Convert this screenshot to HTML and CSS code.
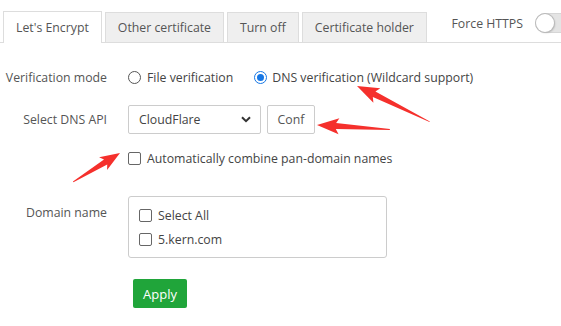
FILE: index.html
```html
<!DOCTYPE html>
<html lang="en">
<head>
    <meta charset="UTF-8">
    <meta name="viewport" content="width=device-width, initial-scale=1.0">
    <title>SSL</title>
    <link rel="stylesheet" href="styles.css">
</head>
<body>

<div class="page">
    <div class="tabs">
        <div class="tab active">Let's Encrypt</div>
        <div class="tab">Other certificate</div>
        <div class="tab">Turn off</div>
        <div class="tab">Certificate holder</div>
        <div class="force">
            <span>Force HTTPS</span>
            <span class="switch"><span class="knob"></span></span>
        </div>
    </div>

    <div class="form">
        <div class="line line-mode">
            <span class="label">Verification mode</span>
            <div class="field">
                <span class="radio"></span>
                <span class="opt">File verification</span>
                <span class="radio checked"></span>
                <span class="opt">DNS verification (Wildcard support)</span>
            </div>
        </div>

        <div class="line line-api">
            <span class="label">Select DNS API</span>
            <div class="field">
                <div class="select">
                    <span>CloudFlare</span>
                    <svg width="10" height="7" viewBox="0 0 10 7"><path d="M1 1.2 L5 5.2 L9 1.2" fill="none" stroke="#333" stroke-width="2"/></svg>
                </div>
                <button type="button" class="conf">Conf</button>
            </div>
        </div>

        <div class="line line-combine">
            <span class="label"></span>
            <div class="field">
                <span class="check"></span>
                <span class="opt">Automatically combine pan-domain names</span>
            </div>
        </div>

        <div class="line line-domain">
            <span class="label">Domain name</span>
            <div class="domain-box">
                <div class="item"><span class="check"></span><span>Select All</span></div>
                <div class="item"><span class="check"></span><span>5.kern.com</span></div>
            </div>
        </div>

        <div class="line line-apply">
            <span class="label"></span>
            <button type="button" class="apply">Apply</button>
        </div>
    </div>

    <!-- annotation arrows drawn over the form -->
    <svg class="arrows" width="561" height="326" viewBox="0 0 561 326">
        <g transform="translate(357 86) rotate(25.6)">
            <polygon points="0,0 22,-8 19,-3 81,0.5 81,1.2 19,3 22,8" fill="#f5302c"/>
        </g>
        <g transform="translate(317 125) rotate(3.1)">
            <polygon points="0,0 22,-8 19,-3 73,0 73,1 19,3 22,8" fill="#f5302c"/>
        </g>
        <g transform="translate(120 153) rotate(147.8)">
            <polygon points="0,0 20,-7.5 17,-3 55,0 55,1 17,3 20,7.5" fill="#f5302c"/>
        </g>
    </svg>
</div>

</body>
</html>
```

FILE: styles.css
```css
body {
    margin: 0;
    font-family: "Open Sans", "Noto Sans", Arial, sans-serif;
    font-size: 12.3px;
    color: #555;
    background-color: #fff;
    overflow: hidden;
}

.page {
    position: relative;
    width: 561px;
    height: 326px;
}

.tabs {
    display: flex;
    align-items: flex-end;
    gap: 3px;
    padding: 11px 0 0 3px;
    border-bottom: 1px solid #ddd;
    height: 31px;
}

.tab {
    height: 29px;
    line-height: 29px;
    padding: 0 12px;
    border: 1px solid #ddd;
    border-bottom: none;
    background-color: #efefef;
    color: #555;
    white-space: nowrap;
}

.tab.active {
    height: 31px;
    line-height: 32px;
    background-color: #fff;
    margin-bottom: -1px;
}

.force {
    margin-left: auto;
    align-self: flex-start;
    display: flex;
    align-items: center;
    gap: 12px;
    margin-right: -14px;
    height: 22px;
    margin-top: 1px;
}

.switch {
    display: block;
    width: 38px;
    height: 18px;
    border-radius: 10px;
    background-color: #e4e4e4;
    border: 1px solid #d6d6d6;
    position: relative;
}

.knob {
    position: absolute;
    left: 0;
    top: 0;
    width: 18px;
    height: 18px;
    border-radius: 50%;
    background-color: #fff;
    box-shadow: 0 0 0 1px #bbb, 1px 1px 2px rgba(0, 0, 0, 0.2);
}

.form {
    padding-left: 3px;
}

.line {
    display: flex;
    align-items: center;
}

.label {
    width: 104px;
    flex-shrink: 0;
    text-align: right;
    padding-right: 21px;
    color: #555;
    white-space: nowrap;
}

.field {
    display: flex;
    align-items: center;
}

.opt {
    color: #444;
}

.line-mode {
    margin-top: 22px;
    height: 24px;
}

.line-api {
    margin-top: 16px;
}

.line-combine {
    margin-top: 14px;
    height: 20px;
}

.line-domain {
    margin-top: 28px;
    align-items: flex-start;
}

.line-domain .label {
    padding-top: 8px;
}

.line-apply {
    margin-top: 21px;
}

.radio {
    width: 11px;
    height: 11px;
    border: 1px solid #555;
    border-radius: 50%;
    margin-right: 6px;
    position: relative;
}

.radio.checked {
    border-color: #1677e5;
    margin-left: 21px;
    margin-right: 5px;
}

.radio.checked::after {
    content: "";
    position: absolute;
    left: 2px;
    top: 2px;
    width: 7px;
    height: 7px;
    border-radius: 50%;
    background-color: #1677e5;
}

.check {
    display: inline-block;
    width: 11px;
    height: 11px;
    border: 1px solid #666;
    border-radius: 2px;
    margin-right: 6px;
    flex-shrink: 0;
}

.select {
    display: flex;
    align-items: center;
    justify-content: space-between;
    box-sizing: border-box;
    width: 133px;
    height: 29px;
    padding: 0 9px 0 10px;
    border: 1px solid #ccc;
    border-radius: 2px;
    color: #444;
}

.conf {
    margin-left: 6px;
    box-sizing: border-box;
    width: 48px;
    height: 29px;
    border: 1px solid #ccc;
    border-radius: 2px;
    background-color: #fff;
    color: #555;
    font-family: inherit;
    font-size: 12.3px;
    padding: 0;
}

.domain-box {
    box-sizing: border-box;
    width: 259px;
    height: 62px;
    border: 1px solid #ccc;
    border-radius: 3px;
    padding: 6px 10px;
}

.item {
    display: flex;
    align-items: center;
    height: 24px;
    color: #444;
}

.apply {
    margin-left: 5px;
    width: 54px;
    height: 29px;
    border: none;
    border-radius: 2px;
    background-color: #20a53a;
    color: #fff;
    font-family: inherit;
    font-size: 13px;
    padding: 0;
}

.arrows {
    position: absolute;
    left: 0;
    top: 0;
    pointer-events: none;
}
```
